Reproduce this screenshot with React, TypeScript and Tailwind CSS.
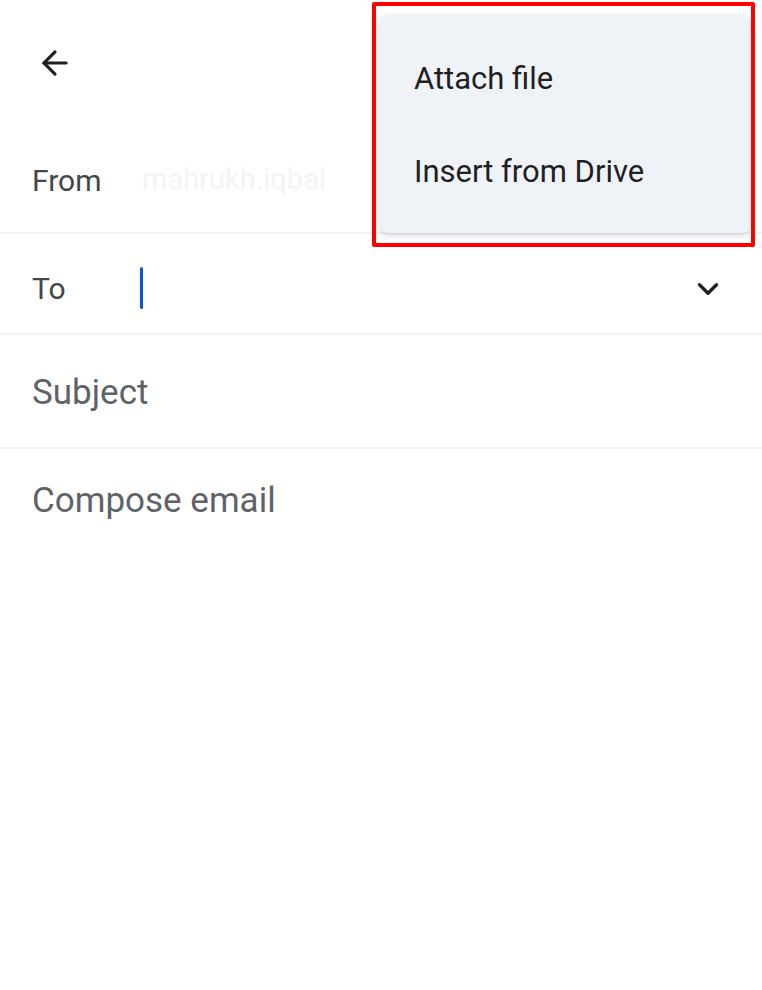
import { ArrowLeft, ChevronDown } from 'lucide-react';

export default function App() {
  return (
    <div className="relative w-[762px] h-[990px] bg-white overflow-hidden" style={{ fontFamily: 'Roboto, "Noto Sans", sans-serif' }}>
      {/* top bar */}
      <div className="h-[125px] flex items-start pt-[44px] pl-[36px]">
        <ArrowLeft className="w-[38px] h-[38px] text-[#1f1f1f]" strokeWidth={2} />
      </div>

      {/* from */}
      <div className="h-[109px] flex items-center pl-[32px] pt-[3px] border-b-2 border-[#f3f3f3]">
        <span className="text-[30px] text-[#444746] w-[110px] shrink-0">From</span>
        <span className="text-[29px] text-[#f4f4f4] whitespace-nowrap">mahrukh.iqbal</span>
      </div>

      {/* to */}
      <div className="h-[101px] flex items-center pl-[32px] pr-[37px] pt-[10px] border-b-2 border-[#f3f3f3]">
        <span className="text-[30px] text-[#444746] w-[108px]">To</span>
        <span className="w-[3px] h-[42px] bg-[#0b57d0] rounded-full -mt-[2px]" />
        <div className="flex-1" />
        <ChevronDown className="w-[34px] h-[34px] text-[#1f1f1f]" strokeWidth={2.3} />
      </div>

      {/* subject */}
      <div className="h-[114px] flex items-center pl-[32px] pt-[4px] border-b-2 border-[#f3f3f3]">
        <span className="text-[35px] text-[#5f6368]">Subject</span>
      </div>

      {/* body */}
      <div className="pl-[32px] pt-[26px]">
        <span className="text-[35px] text-[#5f6368]">Compose email</span>
      </div>

      {/* attach menu */}
      <div className="absolute left-[380px] top-[15px] w-[370px] h-[218px] bg-[#eff2f7] rounded-[8px] shadow-[0_2px_6px_rgba(0,0,0,0.18)] flex flex-col pl-[34px]">
        <div className="h-[110px] flex items-center pt-[18px] text-[31px] text-[#1f1f1f]">Attach file</div>
        <div className="h-[94px] flex items-center text-[31px] text-[#1f1f1f]">Insert from Drive</div>
      </div>

      {/* highlight box */}
      <div className="absolute left-[372px] top-[2px] w-[383px] h-[245px] border-[4px] border-[#ff0000] rounded-[2px]" />
    </div>
  );
}
